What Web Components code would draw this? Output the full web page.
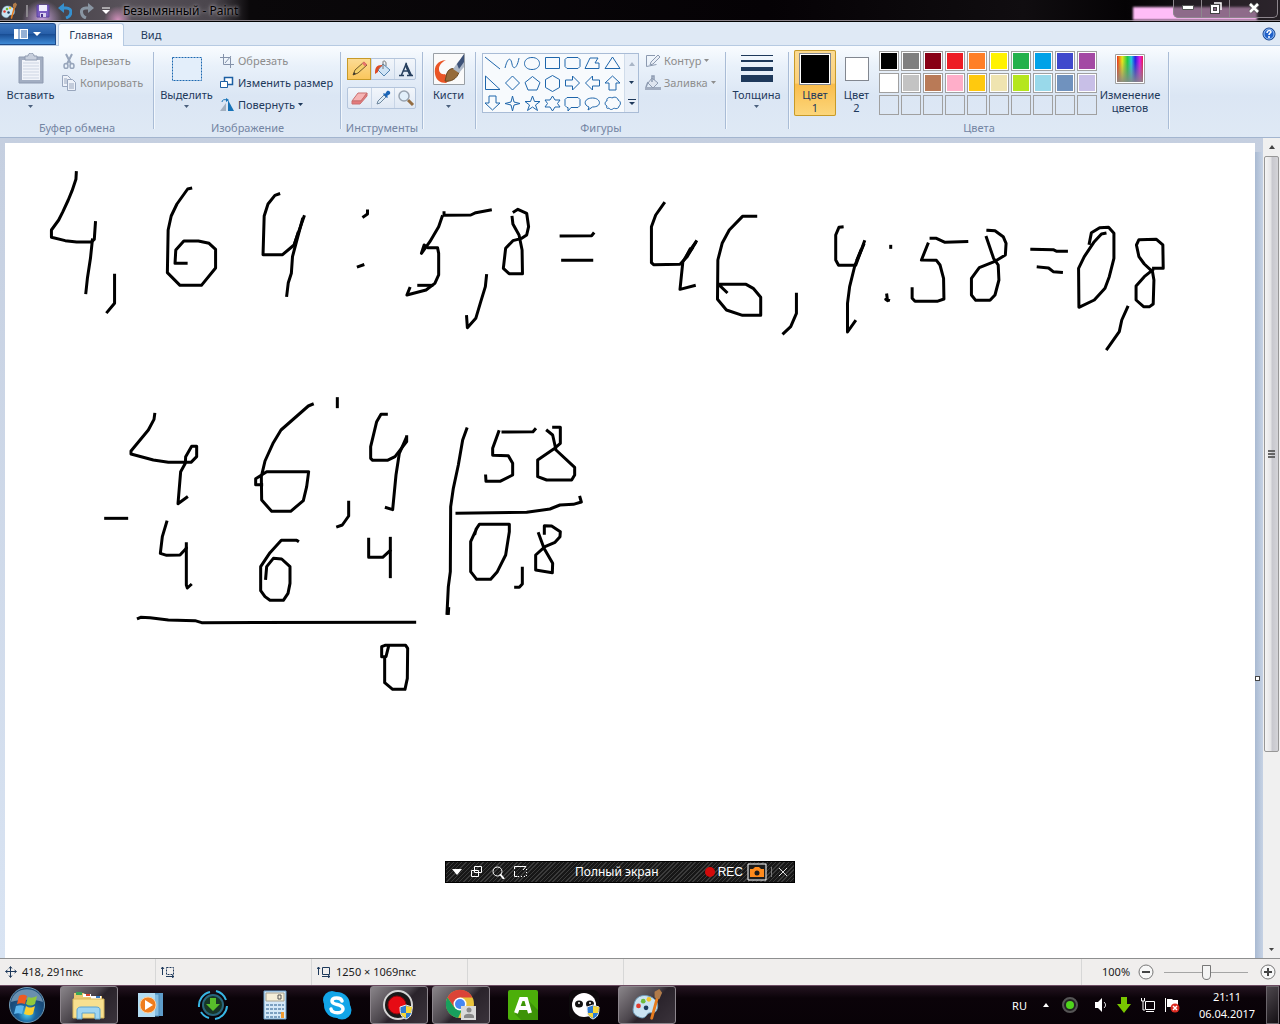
<!DOCTYPE html>
<html lang="ru">
<head>
<meta charset="utf-8">
<title>Безымянный - Paint</title>
<style>
  html, body {
    margin: 0;
    height: 100%;
    overflow: hidden;
  }
  body {
    display: flex;
    flex-direction: column;
    background: #c5cfe0;
    font: 11px/13px "Noto Sans", "Open Sans", sans-serif;
    color: #1e395b;
  }
</style>
</head>
<body>
<title-bar>Безымянный - Paint</title-bar>
<ribbon-tabs></ribbon-tabs>
<paint-ribbon></paint-ribbon>
<paint-workspace></paint-workspace>
<status-bar></status-bar>
<task-bar></task-bar>

<script>
const icons = {
  palette: `<svg width="18" height="18" viewBox="0 0 36 36"><path d="M4 19C5 9 13 6 21 9c8 3 10 9 7 15-3 4-6 1-9 3-2 3-4 6-9 4C4 29 2 25 4 19z" fill="#c9e3f2" stroke="#6d9dbb"/><circle cx="9" cy="19" r="2.500" fill="#e23c2e"/><circle cx="14" cy="14" r="2.500" fill="#6cbb3c"/><circle cx="20" cy="12" r="2.500" fill="#f3c32b"/><circle cx="17" cy="21" r="2.500" fill="#1d3c5e"/><path d="M29 10l-6 22" stroke="#e67b1e" stroke-width="3" stroke-linecap="round"/><path d="M26 10l0-6 5-3 3 4-3 7z" fill="#b07b4a"/></svg>`,
  save: `<svg width="14" height="14"><path d="M1 1h12v12H1z" fill="#7a5cc0" stroke="#5b43a1"/><path d="M3 1h8v6H3z" fill="#f2eeff"/><path d="M4 9h6v4H4z" fill="#d9d0ee"/><path d="M5 10h2v3H5z" fill="#4b3391"/></svg>`,
  undo: `<svg width="14" height="16"><path d="M4 5h4c7 0 6 8 0 10" fill="none" stroke="#3590cf" stroke-width="3"/><path d="M0 5l6-5v10z" fill="#3590cf"/></svg>`,
  redo: `<svg width="14" height="16"><path d="M10 5H6c-7 0-5 8 0 10" fill="none" stroke="#8995a2" stroke-width="3"/><path d="M14 5L8 0v10z" fill="#8995a2"/></svg>`,
  customize: `<svg width="8" height="8"><path d="M0 1h8" stroke="#fff"/><path d="M0 3h8L4 7z" fill="#fff"/></svg>`,
  menu: `<svg width="27" height="12"><path d="M0 1h14v10H0z" fill="#fff"/><path d="M5 1v10M7 3h6M7 5h6M7 7h6M7 9h6" stroke="#2a62ab"/><path d="M19 4h8l-4 4z" fill="#fff"/></svg>`,
  help: `<svg width="14" height="14"><circle cx="7" cy="7" r="6" fill="#2161c9" stroke="#123f8a"/><circle cx="7" cy="7" r="5" fill="none" stroke="#9cc3f5"/><path d="M5 6c0-3 4-3 4-1 0 1-2 1-2 3M7 9v2" fill="none" stroke="#fff" stroke-width="1.500"/></svg>`,
  arrow: `<svg width="5" height="3"><path d="M0 0h5L2.500 3z" fill="currentColor"/></svg>`,
  paste: `<svg width="26" height="32"><path d="M1 4h24v26H1z" fill="#a3aec2" stroke="#8f9bb1"/><path d="M4 7h18v20H4z" fill="#f1f4fa"/><path d="M5 10h16M5 13h16M5 16h16M5 19h16M5 22h16M5 25h16" stroke="#cdd5e3"/><path d="M7 3h3c0-4 6-4 6 0h3v4H7z" fill="#c7cfdd" stroke="#8f9bb1"/></svg>`,
  cut: `<svg width="14" height="16" fill="none" stroke="#97a5bb"><path d="M4 1l5 10M10 1L5 11" stroke-width="2"/><ellipse cx="4" cy="13" rx="2" ry="2.500" stroke-width="1.500"/><ellipse cx="10" cy="13" rx="2" ry="2.500" stroke-width="1.500"/></svg>`,
  copy: `<svg width="16" height="16" fill="#eef2f9" stroke="#98a6bd"><path d="M1.500.500h5l3 3v8h-8z"/><path d="M3 4h3M3 6h3M3 8h3"/><path d="M6.500 4.500h5l3 3v8h-8z"/><path d="M8 9h5M8 11h5M8 13h5"/></svg>`,
  select: `<svg width="30" height="24"><path d="M.500.500h29v23H.500z" fill="#e3eefa" stroke="#1c68b0" stroke-dasharray="2 1"/></svg>`,
  crop: `<svg width="14" height="14" fill="none" stroke="#8492aa"><path d="M3.500 0v10.500H14M0 3.500h10.500V14M5 9l6-7"/></svg>`,
  resize: `<svg width="14" height="13" fill="#fff" stroke="#1c5fa3"><path d="M4.500 1.500h8v7h-8z" stroke-width="1.500"/><path d="M.500 5.500h7v6h-7z"/></svg>`,
  rotate: `<svg width="14" height="14"><path d="M0 13l6-8v8z" fill="#a4b0bf"/><path d="M8 13V2l6 11z" fill="#1773b8"/><path d="M2 4c0-2 2-3 5-2" fill="none" stroke="#1773b8"/><path d="M6 0l3 2-3 2z" fill="#1773b8"/></svg>`,
  pencil: `<svg width="18" height="18"><path d="M3 15l2-5 9-8 3 3-9 8z" fill="#f3d06b" stroke="#705829"/><path d="M12 3.500l3 3 2-2-3-3z" fill="#e8766c"/><path d="M3 15l1-3 2 2z" fill="#333"/></svg>`,
  fill: `<svg width="18" height="18"><path d="M9 4l7 6-6 6-6-6z" fill="#cfe3f5" stroke="#5484b0"/><path d="M9 9V2c0-2 3-1 3 1v3" fill="none" stroke="#777"/><path d="M8 5C2 5 1 8 1 14l3-2c0-3 1-4 4-6z" fill="#dc4a25"/></svg>`,
  text: `<svg width="18" height="18"><path d="M9.500 3L4.500 15M8.500 4l5 11M5.500 11h7M2 15.500h5M10 15.500h6" fill="none" stroke="#27405f" stroke-width="1.500"/><path d="M9 2l6 13h-3L8 6z" fill="#27405f"/></svg>`,
  eraser: `<svg width="18" height="18"><path d="M1 12l6-8h9l-6 8z" fill="#f6b4b4" stroke="#c97070"/><path d="M1 12v3h8l7-8V4l-6 8z" fill="#e57b7d" stroke="#c97070"/></svg>`,
  picker: `<svg width="18" height="18"><path d="M3 15l1-3 6-6 2 2-6 6z" fill="#dcebf7" stroke="#6f879d"/><path d="M9 5l1-1 1 1 2-3c2-1 4 1 3 3l-3 2 1 1-1 1z" fill="#1b65b6"/></svg>`,
  lens: `<svg width="18" height="18"><path d="M11 11l5 5" stroke="#946d42" stroke-width="3"/><circle cx="7" cy="7" r="5" fill="#e2f0fb" stroke="#98a3b0" stroke-width="1.500"/></svg>`,
  brush: `<svg width="32" height="32"><path d="M.500.500h31v31H.500z" fill="#fafafa" stroke="#9aa0a6"/><path d="M13 7C4 8 1 13 2 21c1 6 5 9 11 9l4-3-5-6c-4 1-6-2-6-5 0-4 3-7 7-9z" fill="#ea5526"/><path d="M13 24c1-9 8-11 13-5-2 7-8 10-14 9z" fill="#966b3a" stroke="#694822"/><path d="M20 16l5-7 6-6v11l-5 6z" fill="#aeb9c8"/><path d="M24 11l7-10v8l-5 7z" fill="#3d5278"/></svg>`,
  outline: `<svg width="16" height="14" fill="none" stroke="#8c9ab0"><path d="M10 1.500H1.500v11l10-2"/><path d="M5 11l1-3 7-7 2 2-7 7z" fill="#e9eef6"/></svg>`,
  fillGray: `<svg width="16" height="15"><path d="M0 12h16v3H0z" fill="#a2adc0"/><path d="M7 3l6 5-5 5-5-5z" fill="#dfe5ef" stroke="#8f9cb2"/><path d="M7 7V1h2v4M3 7l-2 5" fill="none" stroke="#8f9cb2" stroke-width="1.500"/></svg>`,
  thickness: `<svg width="32" height="28" fill="#1e395b"><path d="M0 0h32v1H0zM0 5h32v2H0zM0 12h32v4H0zM0 20h32v7H0z"/></svg>`,
  rainbow: `<svg width="30" height="30"><defs><linearGradient id="h"><stop offset="0" stop-color="#e8331d"/><stop offset=".2" stop-color="#e9e51c"/><stop offset=".4" stop-color="#22c845"/><stop offset=".55" stop-color="#25c9dc"/><stop offset=".7" stop-color="#2222e5"/><stop offset=".88" stop-color="#e01ee2"/><stop offset="1" stop-color="#e81d4b"/></linearGradient><linearGradient id="v" x2="0" y2="1"><stop offset=".2" stop-color="#888" stop-opacity="0"/><stop offset="1" stop-color="#888" stop-opacity=".9"/></linearGradient></defs><path d="M.500.500h29v29H.500z" fill="#fff" stroke="#a0a0a0"/><path d="M2 2h26v26H2z" fill="url(#h)"/><path d="M2 2h26v26H2z" fill="url(#v)"/></svg>`,
  minimize: `<svg width="12" height="6"><path d="M.500.500h11v4H.500z" fill="#fff" stroke="#555"/></svg>`,
  restore: `<svg width="12" height="12" fill="none"><path d="M4 1h7v7" stroke="#fff" stroke-width="1.500"/><path d="M2 4h6v6H2z" stroke="#444" stroke-width="4"/><path d="M2 4h6v6H2z" stroke="#fff" stroke-width="2"/></svg>`,
  close: `<svg width="12" height="12"><path d="M2 2l8 8M10 2l-8 8" stroke="#555" stroke-width="4"/><path d="M2 2l8 8M10 2l-8 8" stroke="#fff" stroke-width="2.500"/></svg>`,
  move: `<svg width="12" height="12" fill="none" stroke="#1e395b"><path d="M5.500 1v10M1 5.500h10M4 2.500l1.500-2 1.500 2M4 9.500l1.500 2 1.500-2M2.500 4l-2 1.500 2 1.500M9.500 4l2 1.500-2 1.500"/></svg>`,
  selSize: `<svg width="14" height="12" fill="none" stroke="#1e395b"><path d="M5.500 1.500h7v7h-7z" stroke-dasharray="2 1"/><path d="M1.500 9V1M0 3l1.500-2L3 3M5 10.500h8M11 9l2 1.500-2 1.500"/></svg>`,
  imgSize: `<svg width="14" height="12" fill="none" stroke="#1e395b"><path d="M5.500 1.500h7v7h-7z"/><path d="M1.500 9V1M0 3l1.500-2L3 3M5 10.500h8M11 9l2 1.500-2 1.500"/></svg>`,
  minus: `<svg width="16" height="16"><circle cx="8" cy="8" r="7" fill="#f7f7f7" stroke="#777"/><path d="M4 8h8" stroke="#444" stroke-width="2"/></svg>`,
  plus: `<svg width="16" height="16"><circle cx="8" cy="8" r="7" fill="#f7f7f7" stroke="#777"/><path d="M4 8h8M8 4v8" stroke="#444" stroke-width="2"/></svg>`,
  up: `<svg width="6" height="4"><path d="M0 4h6L3 0z" fill="currentColor"/></svg>`,
  start: `<svg width="38" height="38"><defs><radialGradient id="o" cx=".5" cy=".75"><stop offset="0" stop-color="#4fd3f5"/><stop offset=".5" stop-color="#1b659f"/><stop offset="1" stop-color="#1a4a78"/></radialGradient></defs><circle cx="19" cy="19" r="17.500" fill="url(#o)" stroke="#6f9ab5"/><path d="M3 16C6-1 32-1 35 16c-8-3-23-3-32 0z" fill="#b9d4e6" opacity=".5"/><path d="M11 10c3-2 6-1 8 0l-2 8c-3-1-5-1-8 0z" fill="#ee5b22"/><path d="M20 11c3 1 5 1 9-1l-2 8c-3 2-6 2-9 0z" fill="#91c83d"/><path d="M8 20c3-1 6-1 8 0l-2 8c-3-1-5-1-8 0z" fill="#5cb6ee"/><path d="M18 20c3 2 5 2 9 0l-2 8c-3 2-6 1-9 0z" fill="#fcd02e"/></svg>`,
  explorer: `<svg width="34" height="30"><path d="M2 3h10l2 3h16v21H2z" fill="#e9c870"/><path d="M4 2h6v3H4z" fill="#3aa657"/><path d="M11 4h8v3h-8z" fill="#fff"/><path d="M14 4h4v2h-4z" fill="#d8412d"/><path d="M19 6h10v3H19z" fill="#fff"/><path d="M24 6h4v2h-4z" fill="#3378c0"/><path d="M1 9h31v19H1z" fill="#f8e08f" stroke="#d8b85c"/><path d="M5 29v-9c0-2 2-3 4-3h15c3 0 4 1 4 3v9h-5v-6H10v6z" fill="#9fd5f2" stroke="#5ba3d1"/></svg>`,
  wmp: `<svg width="28" height="26"><path d="M8 1h18v23H8z" fill="#5e9cc9"/><path d="M4 2h18v22H4z" fill="#83bbdf" stroke="#4d8dbb"/><path d="M1 1h17v24H1z" fill="#b3dcf2"/><circle cx="11" cy="13" r="8" fill="#ef7d1d" stroke="#fbd0a0"/><path d="M8 8l8 5-8 5z" fill="#fff"/></svg>`,
  download: `<svg width="32" height="32" fill="none"><circle cx="16" cy="16" r="10" fill="#173526" stroke="#29667c" stroke-width="2"/><path d="M2 18A14 14 0 0 1 13 3M19 2a14 14 0 0 1 10 9M30 17A14 14 0 0 1 18 30M12 29a14 14 0 0 1-8-6" stroke="#37b6e4" stroke-width="2"/><path d="M13 9h6v6h4l-7 7-7-7h4z" fill="#58bd2b"/></svg>`,
  calc: `<svg width="24" height="30"><path d="M1 1h22v28H1z" fill="#d4e8f7" stroke="#6ba0cb"/><path d="M3 3h18v8H3z" fill="#f6efd8" stroke="#a5a08f"/><path d="M15 5h3v4h-3z" fill="none" stroke="#555"/><path d="M3 15h18M3 19h18M3 23h18M3 27h14" stroke="#7ba0c0" stroke-width="2" stroke-dasharray="3 1"/><path d="M18 22h3v6h-3z" fill="#ef9a30"/></svg>`,
  skype: `<svg width="30" height="30"><circle cx="10" cy="10" r="9" fill="#12a5e8"/><circle cx="20" cy="20" r="9.500" fill="#12a5e8"/><circle cx="15" cy="15" r="13" fill="#12a5e8"/><path d="M20 11c-1-4-10-4-10 0 0 5 11 2 11 8 0 5-11 5-12 0" fill="none" stroke="#fff" stroke-width="3.500" stroke-linecap="round"/></svg>`,
  record: `<svg width="34" height="32"><circle cx="16" cy="16" r="14" fill="#191919" stroke="#d5d5d5" stroke-width="2"/><circle cx="15" cy="16" r="9" fill="#e60b14" stroke="#8e070c"/><path d="M18 18l6-2 6 2c0 7-1 10-6 12-5-2-6-5-6-12z" fill="#2d7cd3" stroke="#eee"/><path d="M24 17v7h5c0-2 1-4 1-6zM24 24v5c-3-1-5-3-5-5z" fill="#f7d737"/></svg>`,
  chrome: `<svg width="32" height="32"><circle cx="15" cy="15" r="14" fill="#e9c33a"/><path d="M2.500 8.500a14 14 0 0 1 25 0H15L9 18z" fill="#db4437"/><path d="M2.500 8.500L9 18l8 3-4 8A14 14 0 0 1 2.500 8.500z" fill="#18a05d"/><circle cx="15" cy="15" r="6.500" fill="#fff"/><circle cx="15" cy="15" r="5" fill="#4587f3"/><path d="M16 17h15v14H16z" fill="#dadada"/><circle cx="24" cy="21" r="2.500" fill="#888"/><path d="M19 29v-2c1-3 9-3 10 0v2z" fill="#888"/></svg>`,
  greenA: `<svg width="30" height="30"><rect width="30" height="30" rx="2" fill="#4caf0a"/><path d="M18 8l12 12v10H13l-6-6z" fill="#3d9307"/><path d="M8 23l5-14h5l4 14M11 18h9" fill="none" stroke="#fff" stroke-width="4"/></svg>`,
  panda: `<svg width="32" height="30"><rect width="30" height="30" rx="6" fill="#0d0a0c"/><circle cx="15" cy="15" r="12" fill="#fff"/><ellipse cx="10" cy="14" rx="4" ry="3.500" fill="#111"/><ellipse cx="21" cy="14" rx="4" ry="3.500" fill="#111"/><circle cx="10" cy="13" r="1" fill="#fff"/><circle cx="21" cy="13" r="1" fill="#fff"/><path d="M18 17l6-2 6 2c0 7-1 10-6 12-5-2-6-5-6-12z" fill="#2d7cd3" stroke="#eee"/><path d="M24 16v7h5c0-2 1-4 1-6zM24 23v5c-3-1-5-3-5-5z" fill="#f7d737"/></svg>`,
  trayRec: `<svg width="18" height="18"><circle cx="9" cy="9" r="7" fill="#222" stroke="#555" stroke-width="2"/><circle cx="9" cy="9" r="4" fill="#4fd51c"/></svg>`,
  speaker: `<svg width="14" height="14"><path d="M1 4h3l4-4v14L4 10H1z" fill="#fff"/><path d="M10 4c2 2 2 4 0 6" fill="none" stroke="#fff"/></svg>`,
  trayDown: `<svg width="16" height="18"><path d="M5 1h6v7h4l-7 9-7-9h4z" fill="#79c600"/></svg>`,
  network: `<svg width="16" height="16" fill="none" stroke="#fff"><path d="M5.500 4.500h9v8h-9zM6 14.500h8M1.500 1v3h3V1M3 4v9h2"/></svg>`,
  flag: `<svg width="16" height="16"><path d="M1.500 1v14" stroke="#fff"/><path d="M3 2h5l1 1h5v7H3z" fill="#fff"/><circle cx="11" cy="11" r="4.500" fill="#dc2c22"/><path d="M9 9l4 4M13 9l-4 4" stroke="#fff" stroke-width="1.500"/></svg>`,
  recMenu: `<svg width="10" height="6"><path d="M0 0h10L5 6z" fill="#fff"/></svg>`,
  recWindows: `<svg width="12" height="12" fill="none" stroke="#fff"><path d="M3.500.500h7v6h-7zM.500 4.500h7v6h-7z"/></svg>`,
  recLens: `<svg width="13" height="13" fill="none" stroke="#fff"><circle cx="5.500" cy="5.500" r="4.500"/><path d="M8 8l4 5" stroke-width="2"/></svg>`,
  recArea: `<svg width="13" height="12" fill="none" stroke="#fff"><path d="M.500 3V.500H12M.500 5v5.500h3M12 .500L9 4"/><path d="M4 10.500h8.500V2" stroke-dasharray="1 2"/></svg>`,
  recDot: `<svg width="12" height="12"><circle cx="6" cy="6" r="5" fill="#d20a0a"/></svg>`,
  camera: `<svg width="20" height="18"><path d="M1 1h18v16H1z" fill="#1c1c1c" stroke="#fff"/><path d="M3 6h3l2-2h4l2 2h3v8H3z" fill="#ff8a1c"/><circle cx="10" cy="10" r="2.500" fill="#1c1c1c"/></svg>`,
  recClose: `<svg width="10" height="10"><path d="M1 1l8 8M9 1L1 9" stroke="#ddd"/></svg>`
};

// base class: puts template() and styles() in an open shadow root
class PaintElement extends HTMLElement {
  constructor() {
    super();
    this.attachShadow({ mode: 'open' });
  }
  connectedCallback() {
    this.shadowRoot.innerHTML = `<style>
      * { box-sizing: border-box; }
      button { margin: 0; padding: 0; border: 0; background: none; font: inherit; color: inherit; }
      ${this.styles()}
    </style>${this.template()}`;
  }
}

class UiIcon extends PaintElement {
  styles() {
    return `:host { display: inline-flex; flex: none; } svg { display: block; }`;
  }
  template() {
    return icons[this.getAttribute('name')];
  }
}

class TitleBar extends PaintElement {
  styles() {
    return `
      :host {
        display: flex;
        flex: none;
        align-items: center;
        position: relative;
        height: 22px;
        box-sizing: border-box;
        border-bottom: 1px solid #000;
        box-shadow: inset 0 -1px #8d868d;
        background:
          radial-gradient(circle at 42px 20px, #c9a5dd, transparent 20px),
          radial-gradient(circle at 118px 20px, #d190bb, transparent 14px),
          linear-gradient(90deg, #3c383e 0, #575159 120px, #4a454c 215px, #0a080a 250px, #050205 60%, #100d10 80%, #050305 88%, #262026);
        font-size: 12px;
        line-height: 20px;
        color: #000;
      }
      .quick { display: flex; align-items: center; gap: 8px; width: 123px; }
      .quick button { display: flex; }
      .bar { width: 2px; height: 12px; background: #8a868c; }
      .title { flex: 1; text-shadow: 0 0 5px #b0abb2, 0 0 3px #a09ba2; }
      .glow { position: absolute; right: 23px; bottom: 1px; width: 124px; height: 13px; background: #ffbdf7; filter: blur(1px); }
      .controls { display: flex; position: relative; height: 18px; margin: 0 2px 4px 0; border: 1px solid #8d868d; border-top: 0; border-radius: 0 0 5px 5px; background: rgba(50, 40, 50, .55); }
      .controls button { display: flex; align-items: center; justify-content: center; width: 28px; border-right: 1px solid #8d868d; }
      .controls button:last-child { width: 47px; border: 0; }
    `;
  }
  template() {
    return `
      <div class="quick">
        <ui-icon name="palette"></ui-icon><span class="bar"></span>
        <button aria-label="Сохранить"><ui-icon name="save"></ui-icon></button>
        <button aria-label="Отменить"><ui-icon name="undo"></ui-icon></button>
        <button aria-label="Вернуть"><ui-icon name="redo"></ui-icon></button>
        <button aria-label="Настройка"><ui-icon name="customize"></ui-icon></button>
      </div>
      <span class="title"><slot></slot></span>
      <div class="glow"></div>
      <div class="controls">
        <button aria-label="Свернуть"><ui-icon name="minimize"></ui-icon></button>
        <button aria-label="Восстановить"><ui-icon name="restore"></ui-icon></button>
        <button aria-label="Закрыть"><ui-icon name="close"></ui-icon></button>
      </div>
    `;
  }
}

class RibbonTabs extends PaintElement {
  styles() {
    return `
      :host { display: flex; flex: none; height: 24px; background: #dfe9f5; box-shadow: inset 0 -1px #b6cae2; }
      nav { display: flex; flex: 1; align-items: stretch; padding-top: 1px; }
      .menu { display: flex; align-items: center; justify-content: center; width: 56px; height: 22px; margin-right: 2px; border: 1px solid #1d4b8b; border-left: 0; border-radius: 0 3px 0 0; background: linear-gradient(#3d76bd, #275fa9 48%, #174b92 50%, #3f8ad6); }
      .tab { width: 66px; line-height: 22px; }
      .tab.view { width: 54px; }
      .tab.active { border: 1px solid #b6cae2; border-bottom: 0; border-radius: 3px 3px 0 0; background: #f9fcff; }
      .help { display: flex; align-items: center; margin-right: 4px; }
    `;
  }
  template() {
    return `
      <nav>
        <button class="menu" aria-label="Меню"><ui-icon name="menu"></ui-icon></button>
        <button class="tab active">Главная</button>
        <button class="tab view">Вид</button>
      </nav>
      <button class="help" aria-label="Справка"><ui-icon name="help"></ui-icon></button>
    `;
  }
}

class RibbonGroup extends PaintElement {
  styles() {
    return `
      :host { display: flex; flex-direction: column; flex: none; position: relative; box-sizing: border-box; height: 91px; }
      :host::after { content: ""; position: absolute; right: 0; top: 6px; bottom: 8px; width: 1px; background: #a9bcd6; box-shadow: 1px 0 #f2f7fc; }
      .content { display: flex; flex: 1; padding-top: 4px; }
      .label { height: 17px; line-height: 15px; text-align: center; color: #7485a3; }
    `;
  }
  template() {
    return `<div class="content"><slot></slot></div><div class="label">${this.getAttribute('label') || ''}</div>`;
  }
}

class BigButton extends PaintElement {
  styles() {
    return `
      :host { display: flex; flex: none; }
      button { display: flex; flex-direction: column; align-items: center; width: 100%; height: 66px; border-radius: 2px; }
      .icon { display: flex; align-items: center; justify-content: center; height: 38px; }
      .text { white-space: pre-line; text-align: center; }
      .text + ui-icon { margin-top: 4px; color: #4b607d; }
      :host([active]) button { background: linear-gradient(#fbdb94, #fbd07b 50%, #f9bd4d 52%, #fcd77d); box-shadow: inset 0 0 0 1px #c79a28; }
    `;
  }
  template() {
    const arrow = this.hasAttribute('arrow') ? '<ui-icon name="arrow"></ui-icon>' : '';
    return `<button><span class="icon"><slot></slot></span><span class="text">${this.getAttribute('text')}</span>${arrow}</button>`;
  }
}

class SmallButton extends PaintElement {
  styles() {
    return `
      :host { display: flex; }
      button { display: flex; align-items: center; gap: 3px; height: 22px; padding-bottom: 1px; white-space: nowrap; }
      .icon { display: flex; justify-content: center; width: 16px; }
      button:disabled { color: #8d8d8d; }
    `;
  }
  template() {
    const arrow = this.hasAttribute('arrow') ? '<ui-icon name="arrow"></ui-icon>' : '';
    const disabled = this.hasAttribute('disabled') ? 'disabled' : '';
    return `<button ${disabled}><span class="icon"><ui-icon name="${this.getAttribute('icon')}"></ui-icon></span><slot></slot>${arrow}</button>`;
  }
}

class ToolGrid extends PaintElement {
  styles() {
    return `
      :host { display: flex; flex-direction: column; gap: 7px; padding: 8px 6px 0; }
      .row { display: grid; grid-template-columns: repeat(3, 23px); height: 22px; border: 1px solid #b4c5dc; border-radius: 2px; width: 69px; background: linear-gradient(#f2f6fb, #dfe8f4); }
      .row button { display: flex; align-items: center; justify-content: center; border-left: 1px solid #c8d5e6; }
      .row button:first-child { border: 0; }
      .row button.active { margin: -1px 0 -1px -1px; border: 1px solid #c79a28; background: linear-gradient(#fbdb94, #fbc65c); }
    `;
  }
  template() {
    const button = ([name, label]) =>
      `<button class="${name === 'pencil' ? 'active' : ''}" aria-label="${label}"><ui-icon name="${name}"></ui-icon></button>`;
    const top = [['pencil', 'Карандаш'], ['fill', 'Заливка'], ['text', 'Текст']];
    const bottom = [['eraser', 'Ластик'], ['picker', 'Палитра'], ['lens', 'Масштаб']];
    return `<div class="row">${top.map(button).join('')}</div><div class="row">${bottom.map(button).join('')}</div>`;
  }
}

class ShapeGallery extends PaintElement {
  styles() {
    return `
      :host { display: flex; flex: none; width: 157px; height: 60px; margin: 3px 6px 0; box-sizing: border-box; border: 1px solid #a9bcd6; background: #f7fafd; }
      .shapes { display: grid; grid-template-columns: repeat(7, 20px); grid-auto-rows: 20px; flex: 1; }
      .shapes svg { display: block; fill: none; stroke: #1f66ab; }
      .scroll { display: flex; flex-direction: column; width: 14px; background: #e8eff8; border-left: 1px solid #d0dcea; }
      .scroll button { display: flex; flex: 1; align-items: center; justify-content: center; }
      .scroll .up { color: #a9b5c6; }
    `;
  }
  template() {
    const shapes = [
      'M2 3l15 12',
      'M2 14C5 2 8 4 9 10s5 5 7-6',
      'M9 3.500c10 0 10 12 0 12s-10-12 0-12',
      'M2.500 3.500h14v11h-14z',
      'M4 3.500h11l2 2v7l-2 2H4l-2-2v-7z',
      'M2 14.500L7 4h8l-3 5h4v5.500z',
      'M9.500 3l7.500 11.500H2z',
      'M2.500 2v13.500H17z',
      'M9.500 2l7 7-7 7-7-7z',
      'M9.500 2.500l7.500 6-3 7.500H5l-3-7.500z',
      'M9.500 1.500l7 4v8l-7 4-7-4v-8z',
      'M2.500 6h7V2l7 7-7 7v-4h-7z',
      'M16.500 6h-7V2l-7 7 7 7v-4h7z',
      'M6 16V9H2l7.500-7L17 9h-4v7z',
      'M6 2v7H2l7.500 7L17 9h-4V2z',
      'M9.500 2l1.500 6 6 1.500-6 1.500-1.500 6L8 11 2 9.500 8 8z',
      'M9.500 2l2 5.500H17L12.500 11l2 5.500-5-3.500-5 3.500 2-5.500L2 7.500h5.500z',
      'M9.500 2L12 6h5l-2.500 3.500L17 13h-5l-2.500 4L7 13H2l2.500-3.500L2 6h5z',
      'M4 3.500h11l2 2v6l-2 2H8L5 17v-3.500H4l-2-2v-6z',
      'M6 13c-6-2-5-9 3.500-9s10 9 0 9L5 16z',
      'M4 12c-3-1-2-5 0-5-1-4 4-4 5-3 3-2 6 0 6 2 3 1 3 5 1 6 0 3-4 3-5 2-2 2-4 2-5 0-2 1-3 0-2-2z'
    ];
    return `
      <div class="shapes">${shapes.map(d => `<svg width="19" height="19"><path d="${d}"/></svg>`).join('')}</div>
      <div class="scroll">
        <button class="up" aria-label="Вверх"><ui-icon name="up"></ui-icon></button>
        <button aria-label="Вниз"><ui-icon name="arrow"></ui-icon></button>
        <button aria-label="Ещё"><svg width="8" height="7"><path d="M0 .500h8" stroke="#1e395b"/><path d="M1 3h6L4 6z" fill="#1e395b"/></svg></button>
      </div>
    `;
  }
}

class ColorPalette extends PaintElement {
  styles() {
    return `
      :host { display: grid; flex: none; grid-template-columns: repeat(10, 20px); grid-auto-rows: 20px; gap: 2px; padding: 1px 2px 0; }
      button { border: 1px solid #a0a0a0; }
      button[data-color] { box-shadow: inset 0 0 0 1px #fff; }
    `;
  }
  template() {
    const colors = [
      '#000000', '#7f7f7f', '#880015', '#ed1c24', '#ff7f27', '#fff200', '#22b14c', '#00a2e8', '#3f48cc', '#a349a4',
      '#ffffff', '#c3c3c3', '#b97a57', '#ffaec9', '#ffc90e', '#efe4b0', '#b5e61d', '#99d9ea', '#7092be', '#c8bfe7'
    ];
    const empty = '<button aria-label="Пусто"></button>'.repeat(10);
    return colors.map(c => `<button data-color style="background:${c}" aria-label="${c}"></button>`).join('') + empty;
  }
}

class PaintRibbon extends PaintElement {
  styles() {
    return `
      :host { display: flex; flex: none; height: 92px; box-sizing: border-box; background: linear-gradient(#f9fcff, #e9f1fa 20px, #dbe6f4 50px, #dfe9f5); border-bottom: 1px solid #a3b5cf; }
      .column { display: flex; flex-direction: column; }
      .swatch { box-sizing: border-box; border: 1px solid #828790; box-shadow: inset 0 0 0 1px #fff; }
      .first { width: 32px; height: 32px; background: #000; }
      .second { width: 24px; height: 24px; background: #fff; }
    `;
  }
  template() {
    return `
      <ribbon-group label="Буфер обмена" style="width:154px">
        <big-button text="Вставить" arrow style="width:61px"><ui-icon name="paste"></ui-icon></big-button>
        <div class="column">
          <small-button icon="cut" disabled>Вырезать</small-button>
          <small-button icon="copy" disabled>Копировать</small-button>
        </div>
      </ribbon-group>
      <ribbon-group label="Изображение" style="width:187px">
        <big-button text="Выделить" arrow style="width:65px"><ui-icon name="select"></ui-icon></big-button>
        <div class="column">
          <small-button icon="crop" disabled>Обрезать</small-button>
          <small-button icon="resize">Изменить размер</small-button>
          <small-button icon="rotate" arrow>Повернуть</small-button>
        </div>
      </ribbon-group>
      <ribbon-group label="Инструменты" style="width:82px">
        <tool-grid></tool-grid>
      </ribbon-group>
      <ribbon-group style="width:53px">
        <big-button text="Кисти" arrow style="width:51px"><ui-icon name="brush"></ui-icon></big-button>
      </ribbon-group>
      <ribbon-group label="Фигуры" style="width:250px">
        <shape-gallery></shape-gallery>
        <div class="column">
          <small-button icon="outline" arrow disabled>Контур</small-button>
          <small-button icon="fillGray" arrow disabled>Заливка</small-button>
        </div>
      </ribbon-group>
      <ribbon-group style="width:63px">
        <big-button text="Толщина" arrow style="width:61px"><ui-icon name="thickness"></ui-icon></big-button>
      </ribbon-group>
      <ribbon-group label="Цвета" style="width:380px">
        <big-button active text="Цвет&#10;1" style="width:42px;margin-left:5px"><span class="swatch first"></span></big-button>
        <big-button text="Цвет&#10;2" style="width:41px"><span class="swatch second"></span></big-button>
        <color-palette></color-palette>
        <big-button text="Изменение&#10;цветов" style="width:62px"><ui-icon name="rainbow"></ui-icon></big-button>
      </ribbon-group>
    `;
  }
}

// freehand strokes, one polyline each, in the units of their group
const sketches = [
  { transform: 'translate(25 7) scale(.38265 .33333)', strokes: [
    '121,68 120,88 110,122 100,150 86,185 75,210 56,240 56,262 92,272 122,276 160,276 168,268 171,218',
    '163,270 158,325 150,385 146,428',
    '221,376 221,460 202,486',
    '420,115 412,117 384,162 369,198 361,240 359,368 392,406 448,406 485,354 485,298 468,280 440,273 402,273 381,300 379,340 408,340',
    '650,132 640,136 622,162 612,198 609,314 660,314 690,285 716,200',
    '712,208 694,285 686,320 683,370 675,398 671,436', '700,250 692,280',
    '872,200 882,192 882,183', '858,350 870,345',
    '1082,188 1082,196 1152,195 1165,188 1203,180',
    '1077,200 1068,230 1045,275 1023,310 1030,285 1040,293 1065,293 1068,310 1068,375 1058,400 1035,420 985,435 992,415',
    '1016,406 1050,406',
    '1193,377 1190,410 1178,455 1165,505 1143,533 1141,500',
    '1265,185 1275,178 1298,190 1303,230 1298,255 1285,265 1262,272 1243,295 1237,355 1252,371 1287,371 1286,300 1278,255 1262,222 1260,202',
    '1388,258 1468,257 1472,251', '1392,331 1468,331'
  ] },
  { transform: 'translate(625 37) scale(.35714 .33333)', strokes: [
    '95,70 72,105 60,140 60,248 66,254 140,253 160,230 185,185',
    '182,190 165,215 148,245 140,328 180,317', '174,205 160,225 168,208',
    '352,109 315,109 278,150 258,190 246,240 245,358 270,390 315,406 366,406 366,352 345,325 325,313 248,313 270,336',
    '466,343 466,400 450,440 430,460',
    '594,141 585,142 576,165 576,240 584,256 632,256 656,185',
    '654,195 630,255 615,320 609,370 609,456 630,424', '646,212 636,238',
    '730,199 730,202', '719,345 721,362 716,358 724,360',
    '843,175 858,175 882,187 943,185',
    '834,192 816,240 858,241 868,255 878,295 879,357 860,364 798,364 790,355 790,326',
    '1002,151 1022,152 1045,170 1053,190 1051,225 1020,245 978,263 956,295 956,345 968,361 1008,361 1022,345 1033,300 1031,255 1018,235 998,172',
    '1125,208 1185,209 1195,214 1222,214', '1143,261 1172,264 1185,275 1208,277',
    '1330,160 1320,162 1300,185 1272,230 1256,265 1257,382 1300,360 1330,325 1342,290 1355,235 1355,160 1340,142 1315,143 1292,158 1286,190',
    '1393,382 1377,420 1370,455 1336,507',
    '1466,265 1493,265 1492,195 1474,178 1425,179 1418,195 1425,230 1440,252 1463,275 1467,300 1465,372 1455,380 1438,380 1417,360 1417,318 1440,290 1463,270'
  ] },
  { transform: 'translate(85 237) scale(.33333)', strokes: [
    '194,103 192,118 175,150 123,213 123,222 190,240 235,247 303,247 320,230 320,199 305,199 287,230 286,250 272,275 264,371 290,352',
    '667,73 655,78 573,150 550,188 525,243 514,290 515,360 545,394 602,394 640,362 650,320 656,275 530,275 497,296 497,314 515,314',
    '742,56 742,80',
    '889,103 873,103 860,125 842,200 842,235 848,241 892,241 915,230 950,185 950,170',
    '948,175 928,220 918,285 908,389 889,383',
    '776,367 776,408 757,435 743,440',
    '47,415 110,415',
    '230,426 217,470 211,520 230,526 270,525 289,505 289,491', '289,505 289,615 292,624 302,615',
    '623,483 620,481 574,481 540,518 512,560 512,632 525,650 540,661 580,661 594,640 600,610 600,560 575,537 550,535 530,560 527,595',
    '836,478 836,532 878,532 900,512', '901,475 901,590',
    '145,715 152,712 180,713 235,720 315,722 335,728 974,727',
    '895,802 888,830 875,830 875,800 885,796 947,796 953,805 952,895 945,928 908,928 884,908 884,830',
    '1130,147 1118,180 1105,255 1090,325 1082,380 1081,575 1075,620 1071,700', '1076,686 1075,700',
    '1239,156 1329,155 1335,148',
    '1226,155 1208,205 1208,226 1255,227 1268,250 1268,285 1230,304 1188,304 1187,288',
    '1391,142 1411,142 1411,190 1390,208 1343,240 1343,290 1370,300 1445,300 1454,285 1454,262 1398,210 1388,165 1372,152',
    '1101,400 1310,397 1380,387 1410,375 1450,373 1474,366 1470,352',
    '1155,460 1158,448 1168,433 1258,433 1258,455 1247,525 1222,575 1202,598 1160,598 1142,575 1142,485 1158,450',
    '1297,565 1297,612 1288,622 1277,622',
    '1363,460 1363,437 1385,438 1411,455 1410,470 1395,487 1365,500 1337,525 1337,570 1387,578 1388,550 1362,505 1346,461'
  ] }
];

class PaintSheet extends PaintElement {
  styles() {
    return `
      :host { display: block; flex: 1; min-width: 0; overflow: hidden; background: #fff; }
      svg { display: block; fill: none; stroke: #000; stroke-width: 3px; stroke-linejoin: round; stroke-linecap: square; }
      polyline { vector-effect: non-scaling-stroke; }
    `;
  }
  template() {
    const groups = sketches.map(s =>
      `<g transform="${s.transform}">${s.strokes.map(p => `<polyline points="${p}"/>`).join('')}</g>`);
    return `<svg width="1250" height="1069">${groups.join('')}</svg>`;
  }
}

class ScrollBar extends PaintElement {
  styles() {
    return `
      :host { display: flex; flex-direction: column; flex: none; width: 17px; box-sizing: border-box; padding: 0 1px; background: #f0f0f0; color: #444; }
      button { display: flex; align-items: center; justify-content: center; height: 18px; flex: none; }
      .track { flex: 1; }
      .thumb { display: flex; flex-direction: column; gap: 1px; align-items: center; justify-content: center; height: 76%; border: 1px solid #979797; border-radius: 2px; background: linear-gradient(90deg, #f5f5f5, #e4e4e6 45%, #c8c8ce 55%, #d4d4d8); }
      .thumb i { width: 7px; height: 2px; background: #666; }
    `;
  }
  template() {
    return `
      <button aria-label="Вверх"><ui-icon name="up"></ui-icon></button>
      <div class="track"><div class="thumb"><i></i><i></i><i></i></div></div>
      <button aria-label="Вниз"><ui-icon name="arrow"></ui-icon></button>
    `;
  }
}

class RecorderBar extends PaintElement {
  styles() {
    return `
      :host { display: flex; align-items: center; box-sizing: border-box; width: 350px; height: 22px; padding: 0 6px; border: 1px solid #000; background: repeating-linear-gradient(135deg, #171717 0 2px, #3b3b3b 2px 3px); color: #fff; font-size: 12px; line-height: 20px; }
      .tools { display: flex; align-items: center; gap: 9px; width: 78px; }
      .name { flex: 1; text-align: center; }
      button { display: flex; align-items: center; }
      .rec { gap: 2px; margin-right: 4px; font-family: "Liberation Sans", sans-serif; }
      .close { margin-left: 4px; padding-left: 6px; border-left: 1px solid #777; }
    `;
  }
  template() {
    return `
      <div class="tools">
        <button aria-label="Меню"><ui-icon name="recMenu"></ui-icon></button>
        <button aria-label="Окна"><ui-icon name="recWindows"></ui-icon></button>
        <button aria-label="Лупа"><ui-icon name="recLens"></ui-icon></button>
        <button aria-label="Область"><ui-icon name="recArea"></ui-icon></button>
      </div>
      <span class="name"><slot></slot></span>
      <button class="rec"><ui-icon name="recDot"></ui-icon>REC</button>
      <button aria-label="Снимок"><ui-icon name="camera"></ui-icon></button>
      <button class="close" aria-label="Закрыть"><ui-icon name="recClose"></ui-icon></button>
    `;
  }
}

class PaintWorkspace extends PaintElement {
  styles() {
    return `
      :host { display: flex; flex: 1; min-height: 0; position: relative; background: #c5cfe0; }
      .view { display: flex; flex: 1; min-width: 0; padding: 5px 0 0 5px; background: linear-gradient(#c5cfe0, #d9e4f3); }
      .edge { width: 8px; margin-top: 9px; background: linear-gradient(90deg, #a9bad2, #c6d2e4); }
      .handle { position: absolute; right: 20px; top: 538px; width: 5px; height: 5px; border: 1px solid #444; background: #fff; }
      recorder-bar { position: absolute; left: 445px; bottom: 75px; }
    `;
  }
  template() {
    return `
      <div class="view"><paint-sheet></paint-sheet><div class="edge"></div></div>
      <scroll-bar></scroll-bar>
      <div class="handle"></div>
      <recorder-bar>Полный экран</recorder-bar>
    `;
  }
}

class StatusBar extends PaintElement {
  styles() {
    return `
      :host { display: flex; flex: none; height: 27px; box-sizing: border-box; border-top: 1px solid #8e8f8f; background: #f0eeed; color: #1a1a1a; line-height: 26px; }
      .cell { display: flex; align-items: center; gap: 5px; width: 156px; padding-left: 5px; border-right: 1px solid #d7d7d7; white-space: nowrap; }
      .rest { flex: 1; }
      .zoom { display: flex; align-items: center; width: 198px; padding: 0 4px 0 20px; }
      .zoom label { flex: 1; }
      .zoom button { display: flex; }
      input { width: 84px; height: 18px; margin: 0 12px 0 10px; appearance: none; background: linear-gradient(#a5a5a5, #a5a5a5) center / 100% 1px no-repeat; }
      input::-webkit-slider-thumb { appearance: none; width: 9px; height: 15px; border: 1px solid #777; border-radius: 1px 1px 5px 5px; background: #f4f4f4; }
    `;
  }
  template() {
    return `
      <div class="cell"><ui-icon name="move"></ui-icon>418, 291пкс</div>
      <div class="cell"><ui-icon name="selSize"></ui-icon></div>
      <div class="cell"><ui-icon name="imgSize"></ui-icon>1250 × 1069пкс</div>
      <div class="cell"></div>
      <div class="cell rest"></div>
      <div class="zoom">
        <label for="zoom">100%</label>
        <button aria-label="Уменьшить"><ui-icon name="minus"></ui-icon></button>
        <input id="zoom" type="range" min="0" max="100" value="50">
        <button aria-label="Увеличить"><ui-icon name="plus"></ui-icon></button>
      </div>
    `;
  }
}

class TaskButton extends PaintElement {
  styles() {
    return `
      :host { display: flex; width: 58px; height: 38px; }
      button { display: flex; align-items: center; justify-content: center; width: 100%; border: 1px solid transparent; border-radius: 3px; }
      :host([open]) button { border-color: #8c858c; background: linear-gradient(135deg, #8a858a, #4b454c 45%, #2a232b 55%, #3a333b); }
    `;
  }
  template() {
    return `<button aria-label="${this.getAttribute('label')}"><slot></slot></button>`;
  }
}

class TaskBar extends PaintElement {
  styles() {
    return `
      :host { display: flex; flex: none; align-items: center; height: 39px; box-sizing: border-box; border-top: 1px solid #6d4c62; background: linear-gradient(#241420, #0b0309 12px, #080207); color: #fff; line-height: 17px; }
      .start { display: flex; width: 60px; padding-left: 8px; }
      .apps { display: flex; gap: 4px; flex: 1; }
      .tray { display: flex; align-items: center; gap: 8px; }
      .lang { margin-right: 8px; }
      .clock { width: 78px; text-align: center; }
      .tray .arrow { display: flex; margin-right: 4px; }
      .desktop { width: 13px; height: 38px; margin-right: 1px; border: 1px solid #6a646a; background: linear-gradient(135deg, #4d474d, #151015); }
    `;
  }
  template() {
    const apps = [
      ['explorer', 'Проводник', 'open'], ['wmp', 'Проигрыватель', ''], ['download', 'Загрузчик', ''],
      ['calc', 'Калькулятор', ''], ['skype', 'Skype', ''], ['record', 'Запись', 'open'],
      ['chrome', 'Chrome', 'open'], ['greenA', 'Приложение', ''], ['panda', 'Панда', '']
    ];
    return `
      <button class="start" aria-label="Пуск"><ui-icon name="start"></ui-icon></button>
      <div class="apps">
        ${apps.map(([icon, label, open]) => `<task-button label="${label}" ${open}><ui-icon name="${icon}"></ui-icon></task-button>`).join('')}
        <task-button label="Paint" open><paint-logo></paint-logo></task-button>
      </div>
      <div class="tray">
        <span class="lang">RU</span>
        <button class="arrow" aria-label="Скрытые значки"><ui-icon name="up"></ui-icon></button>
        <ui-icon name="trayRec"></ui-icon>
        <ui-icon name="speaker" style="margin-left:7px"></ui-icon>
        <ui-icon name="trayDown"></ui-icon>
        <ui-icon name="network"></ui-icon>
        <ui-icon name="flag"></ui-icon>
        <div class="clock">21:11<br>06.04.2017</div>
      </div>
      <button class="desktop" aria-label="Свернуть все окна"></button>
    `;
  }
}

class PaintLogo extends PaintElement {
  styles() {
    return `:host { display: flex; } svg { width: 34px; height: 34px; }`;
  }
  template() {
    return icons.palette;
  }
}

customElements.define('ui-icon', UiIcon);
customElements.define('paint-logo', PaintLogo);
customElements.define('ribbon-group', RibbonGroup);
customElements.define('big-button', BigButton);
customElements.define('small-button', SmallButton);
customElements.define('tool-grid', ToolGrid);
customElements.define('shape-gallery', ShapeGallery);
customElements.define('color-palette', ColorPalette);
customElements.define('paint-sheet', PaintSheet);
customElements.define('scroll-bar', ScrollBar);
customElements.define('recorder-bar', RecorderBar);
customElements.define('task-button', TaskButton);
customElements.define('title-bar', TitleBar);
customElements.define('ribbon-tabs', RibbonTabs);
customElements.define('paint-ribbon', PaintRibbon);
customElements.define('paint-workspace', PaintWorkspace);
customElements.define('status-bar', StatusBar);
customElements.define('task-bar', TaskBar);
</script>
</body>
</html>
